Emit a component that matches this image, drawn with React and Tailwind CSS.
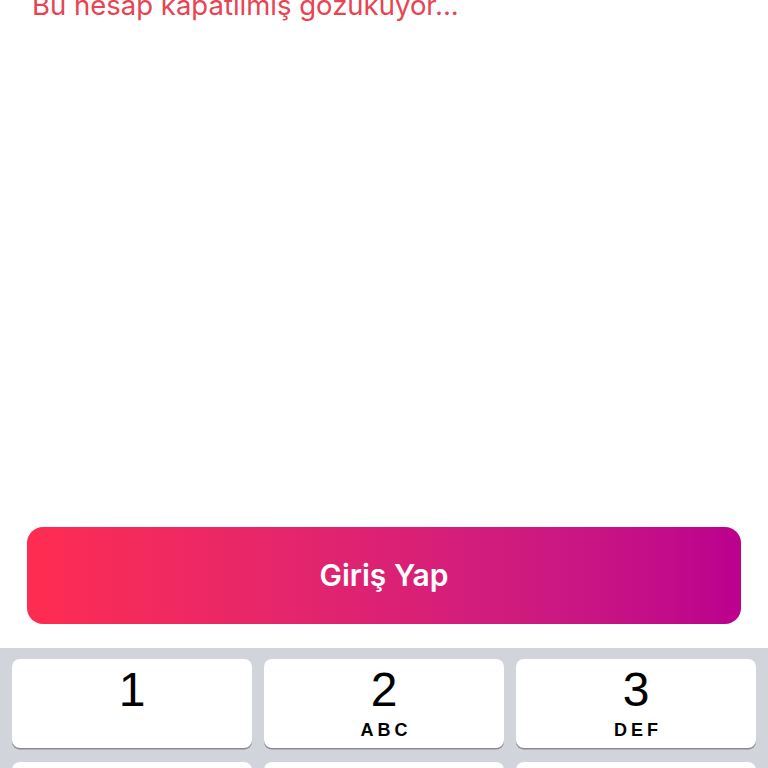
import React from 'react';

const keys = [
  { n: '1', l: '' },
  { n: '2', l: 'ABC' },
  { n: '3', l: 'DEF' },
  { n: '4', l: 'GHI' },
  { n: '5', l: 'JKL' },
  { n: '6', l: 'MNO' },
];

const Key = ({ n, l }) => (
  <div className="flex h-[89px] flex-col items-center rounded-[8px] bg-white shadow-[0_1.5px_0_#898a8d]">
    <span className="mt-[7px] text-[48px] leading-[48px] font-['Liberation_Sans',Arial,sans-serif] text-black">{n}</span>
    {l && (
      <span className="mt-[7px] pl-[4px] text-[18px] leading-[18px] font-bold tracking-[4px] font-['Liberation_Sans',Arial,sans-serif] text-black">
        {l}
      </span>
    )}
  </div>
);

export default function App() {
  return (
    <div className="flex h-[768px] w-[768px] flex-col overflow-hidden bg-white font-['Inter',sans-serif]">
      <p className="-mt-[12px] ml-[32px] text-[27.5px] leading-[34px] text-[#e84352]">
        Bu hesap kapatılmış gözüküyor...
      </p>

      <div className="flex-1" />

      <button className="mx-[27px] flex h-[97px] items-center justify-center rounded-[16px] bg-gradient-to-r from-[#fe2c50] to-[#bb008e] text-[30px] font-semibold text-white">
        Giriş Yap
      </button>

      <div className="mt-[24px] h-[120px] bg-[#d1d4db] px-[12px] pt-[11px]">
        <div className="grid grid-cols-3 gap-x-[12px] gap-y-[14px]">
          {keys.map((k) => (
            <Key key={k.n} {...k} />
          ))}
        </div>
      </div>
    </div>
  );
}
